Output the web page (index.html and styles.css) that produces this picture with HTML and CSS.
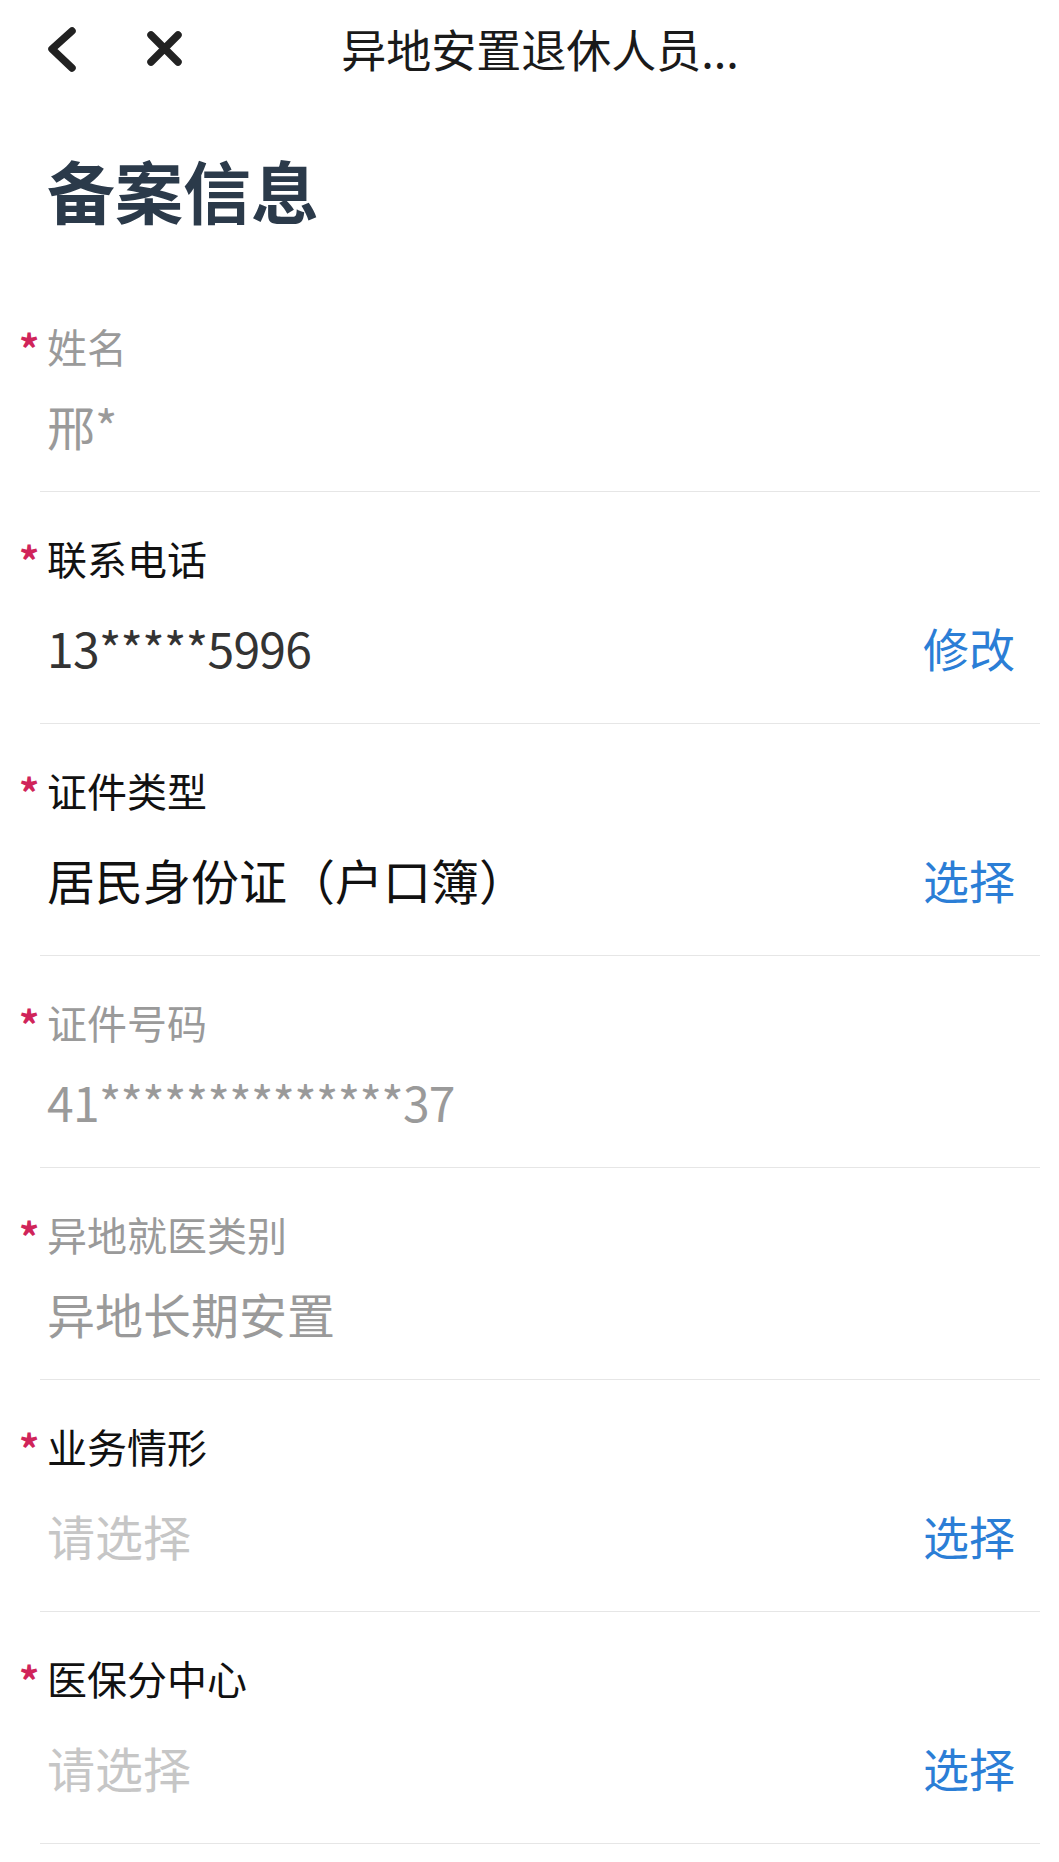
FILE: index.html
```html
<!DOCTYPE html>
<html lang="zh-CN">
<head>
  <meta charset="UTF-8">
  <title>异地安置退休人员备案</title>
  <link rel="stylesheet" href="styles.css">
</head>
<body>
  <div class="nav">
    <div class="nav-icons">
      <svg class="icon-back" width="36" height="48" viewBox="0 0 36 48">
        <polyline points="28,6 8,24 28,43" fill="none" stroke="#222" stroke-width="7.5" stroke-linecap="round" stroke-linejoin="round"/>
      </svg>
      <svg class="icon-close" width="44" height="44" viewBox="0 0 44 44">
        <path d="M8 8 L35 35 M35 8 L8 35" fill="none" stroke="#222" stroke-width="7.5" stroke-linecap="round"/>
      </svg>
    </div>
    <div class="nav-title">异地安置退休人员...</div>
    <div class="nav-side"></div>
  </div>

  <h1 class="page-title">备案信息</h1>

  <div class="form">
    <div class="row">
      <div class="label muted"><span class="req">*</span>姓名</div>
      <div class="value-line"><span class="value muted">邢*</span></div>
    </div>

    <div class="row">
      <div class="label"><span class="req">*</span>联系电话</div>
      <div class="value-line">
        <span class="value dark masked">13*****5996</span>
        <span class="action">修改</span>
      </div>
    </div>

    <div class="row">
      <div class="label"><span class="req">*</span>证件类型</div>
      <div class="value-line">
        <span class="value">居民身份证（户口簿）</span>
        <span class="action">选择</span>
      </div>
    </div>

    <div class="row">
      <div class="label muted"><span class="req">*</span>证件号码</div>
      <div class="value-line"><span class="value muted masked">41**************37</span></div>
    </div>

    <div class="row">
      <div class="label muted"><span class="req">*</span>异地就医类别</div>
      <div class="value-line"><span class="value muted">异地长期安置</span></div>
    </div>

    <div class="row">
      <div class="label"><span class="req">*</span>业务情形</div>
      <div class="value-line">
        <span class="value placeholder">请选择</span>
        <span class="action">选择</span>
      </div>
    </div>

    <div class="row">
      <div class="label"><span class="req">*</span>医保分中心</div>
      <div class="value-line">
        <span class="value placeholder">请选择</span>
        <span class="action">选择</span>
      </div>
    </div>
  </div>
</body>
</html>
```

FILE: styles.css
```css
body { margin: 0; background: #fff; color: #111; font-family: "Noto Sans CJK SC", "Noto Sans", sans-serif; }

.nav { height: 98px; display: flex; align-items: center; padding-left: 44px; }
.nav-icons { display: flex; align-items: center; gap: 63px; }
.nav-icons svg { display: block; }
.nav-title { flex: 1; text-align: center; font-size: 45px; line-height: 60px; color: #1a1a1a; white-space: nowrap; }
.nav-side { width: 166px; }

.page-title { margin: 52px 0 50px 47px; font-size: 68px; line-height: 80px; font-weight: 700; color: #2b3a4a; }

.form { margin: 0 19px 0 40px; }
.row { padding: 38px 25px 34px 7px; border-bottom: 1px solid #e6e6e6; }
.label { display: flex; font-size: 40px; line-height: 56px; height: 56px; color: #111; }
.label.muted { color: #9a9a9a; }
.req { width: 28px; margin-left: -28px; font-size: 40px; line-height: 60px; font-weight: 700; color: #d0245a; }
.value-line { display: flex; align-items: center; justify-content: space-between; margin-top: 19px; }
.value { font-size: 48px; line-height: 64px; color: #111; white-space: nowrap; }
.value.dark { color: #333; }
.value.muted { color: #9a9a9a; }
.value.placeholder { color: #c6c6c6; }
.value.masked { letter-spacing: -0.7px; }
.action { padding: 10px 0; font-size: 46px; line-height: 64px; color: #2b7ed6; }
```
